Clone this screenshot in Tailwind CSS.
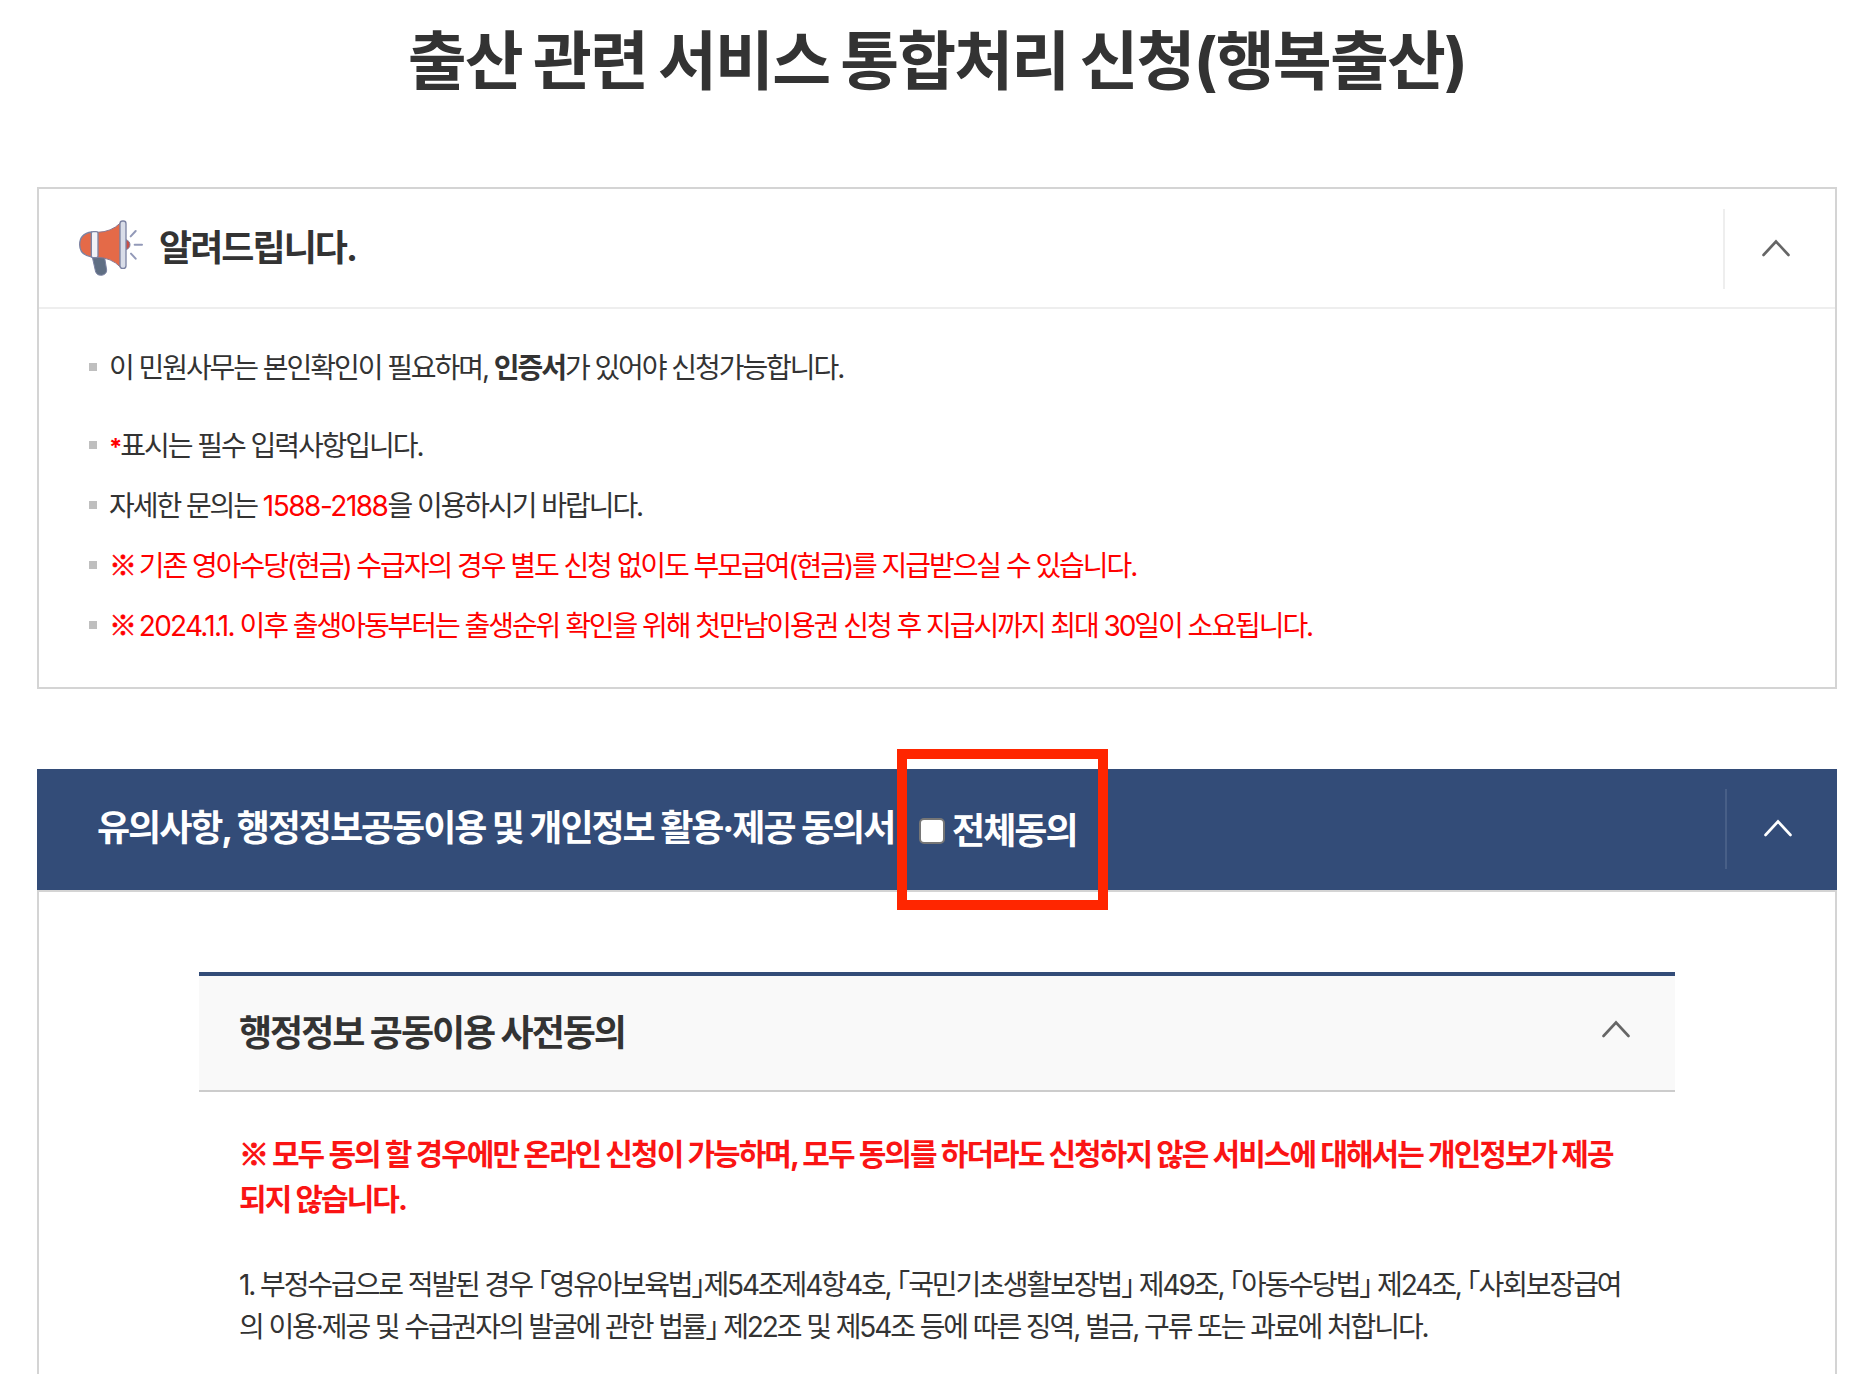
<!DOCTYPE html>
<html lang="ko">
<head>
    <meta charset="UTF-8">
    <meta name="viewport" content="width=device-width, initial-scale=1.0">
    <title>출산 관련 서비스 통합처리 신청(행복출산)</title>
    <script src="https://cdn.jsdelivr.net/npm/@tailwindcss/browser@4"></script>
</head>
<body class="font-[Inter,'Noto_Sans_CJK_KR',sans-serif] bg-white text-[#333] h-[1374px] overflow-hidden">

    <h1 class="h-[187px] pt-[13px] text-center text-[64px] leading-[96px] font-bold tracking-[-1.85px] [word-spacing:-2.2px] whitespace-nowrap">출산 관련 서비스 통합처리 신청(행복출산)</h1>

    <!-- Notice -->
    <section class="mx-[37px] h-[502px] border-2 border-[#d4d4d4]">
        <div class="flex items-center h-[120px] border-b-2 border-[#eee]">
            <svg class="ml-[39px] w-[66px] h-[58px]" viewBox="145 118 198 174" fill="none" stroke-linecap="round">
                <path d="M187 228 L198 277 Q202 288 216 287 Q231 284 231 271 L224 228Z" fill="#5f6e83" stroke="#7c83a3" stroke-width="3"/>
                <path d="M186 157 Q150 162 150 195 Q150 226 187 232Z" fill="#e46a48" stroke="#7c83a3" stroke-width="4"/>
                <path d="M204 158 Q245 157 272 130 V262 Q245 234 204 233Z" fill="#e46a48" stroke="#8c7890" stroke-width="3"/>
                <rect x="185" y="156" width="20" height="78" rx="5" fill="#f1f2f7" stroke="#7c83a3" stroke-width="4"/>
                <path d="M289 180 Q301 184 301 195 Q301 206 289 210Z" fill="#c94f45" stroke="#7c83a3" stroke-width="3"/>
                <rect x="271" y="124" width="18" height="142" rx="8" fill="#d9dde8" stroke="#7c83a3" stroke-width="4"/>
                <path d="M303 170 L318 154 M315 195 H337 M304 222 L318 237" stroke="#9299b8" stroke-width="6"/>
            </svg>
            <h2 class="ml-[15px] text-[36px] font-bold tracking-[-1.95px]">알려드립니다.</h2>
            <div class="ml-auto mt-px flex items-center justify-center w-[112px] h-[80px] border-l-2 border-[#eee]">
                <svg class="w-[28px] h-[18px] mr-[8px] -mt-[2px]" viewBox="0 0 28 18" fill="none" stroke="#666" stroke-width="2.6" stroke-linecap="round"><path d="M1.5 16 L14 2.5 L26.5 16"/></svg>
            </div>
        </div>
        <ul class="pt-[28px] pl-[50px] text-[28px] leading-[60px] tracking-[-2.06px] whitespace-nowrap">
            <li class="flex items-center gap-[12px] mb-[18px]"><i class="size-2 bg-[#bfbfbf]"></i><span class="pt-[2px] -my-px">이 민원사무는 본인확인이 필요하며, <b>인증서</b>가 있어야 신청가능합니다.</span></li>
            <li class="flex items-center gap-[12px]"><i class="size-2 bg-[#bfbfbf]"></i><span class="pt-[2px] -my-px"><em class="not-italic font-bold text-[24px] leading-none text-[#f00]">*</em>표시는 필수 입력사항입니다.</span></li>
            <li class="flex items-center gap-[12px]"><i class="size-2 bg-[#bfbfbf]"></i><span class="pt-[2px] -my-px">자세한 문의는 <em class="not-italic text-[#f00] tracking-[-1.5px]">1588-2188</em>을 이용하시기 바랍니다.</span></li>
            <li class="flex items-center gap-[12px] text-[#f00]"><i class="size-2 bg-[#bfbfbf]"></i><span class="pt-[2px] -my-px"><span class="font-['Noto_Sans_CJK_KR'] leading-none tracking-[-4px] [-webkit-text-stroke:0.5px]">※</span> 기존 영아수당(현금) 수급자의 경우 별도 신청 없이도 부모급여(현금)를 지급받으실 수 있습니다.</span></li>
            <li class="flex items-center gap-[12px] text-[#f00]"><i class="size-2 bg-[#bfbfbf]"></i><span class="pt-[2px] -my-px"><span class="font-['Noto_Sans_CJK_KR'] leading-none tracking-[-4px] [-webkit-text-stroke:0.5px]">※</span> <span class="tracking-[-1.75px]">2024.1.1.</span> 이후 출생아동부터는 출생순위 확인을 위해 첫만남이용권 신청 후 지급시까지 최대 30일이 소요됩니다.</span></li>
        </ul>
    </section>

    <!-- Consent -->
    <section class="mx-[37px] mt-[80px]">
        <div class="relative flex items-center h-[121px] pl-[60px] pb-px bg-[#334c78] text-white text-[36px] font-bold tracking-[-2.04px] whitespace-nowrap">
            <h2 class="-mt-[3px]">유의사항, 행정정보공동이용 및 개인정보 활용·제공 동의서</h2>
            <label class="absolute left-[882px] top-[35px] flex items-center">
                <input type="checkbox" class="appearance-none size-[26px] bg-white border-2 border-[#767676] rounded-[5px]">
                <span class="ml-[7px] tracking-[-1.96px]">전체동의</span>
            </label>
            <div class="absolute left-[860px] -top-[20px] w-[211px] h-[161px] border-[10px] border-[#ff2600]"></div>
            <div class="ml-auto flex items-center justify-center w-[112px] h-[80px] border-l-2 border-[#485f87]">
                <svg class="w-[28px] h-[18px] mr-[8px] -mt-[2px]" viewBox="0 0 28 18" fill="none" stroke="#fff" stroke-width="2.6" stroke-linecap="round"><path d="M1.5 16 L14 2.5 L26.5 16"/></svg>
            </div>
        </div>
        <div class="h-[484px] overflow-hidden pt-[80px] px-[160px] border-2 border-b-0 border-[#d4d4d4]">
            <div class="flex items-center justify-between h-[120px] pl-[40px] pr-[45px] bg-[#f9f9f9] border-t-4 border-t-[#334c78] border-b-2 border-b-[#ccc]">
                <h3 class="text-[36px] font-bold tracking-[-2.04px]">행정정보 공동이용 사전동의</h3>
                <svg class="w-[28px] h-[18px] mb-[8px]" viewBox="0 0 28 18" fill="none" stroke="#666" stroke-width="2.6" stroke-linecap="round"><path d="M1.5 16 L14 2.5 L26.5 16"/></svg>
            </div>
            <div class="pt-[40px] pl-[40px] whitespace-nowrap">
                <p class="text-[30px] leading-[45px] font-bold text-[#fa1414] tracking-[-1.96px]"><span class="font-['Noto_Sans_CJK_KR'] leading-none tracking-[-2.2px] [-webkit-text-stroke:1.2px]">※</span> 모두 동의 할 경우에만 온라인 신청이 가능하며, 모두 동의를 하더라도 신청하지 않은 서비스에 대해서는 개인정보가 제공<br>되지 않습니다.</p>
                <p class="mt-[42px] text-[28px] leading-[42px] tracking-[-2.1px] [font-feature-settings:'halt']">1. 부정수급으로 적발된 경우 「영유아보육법」제54조제4항4호, 「국민기초생활보장법」 제49조, 「아동수당법」 제24조, 「사회보장급여<br>의 이용·제공 및 수급권자의 발굴에 관한 법률」 제22조 및 제54조 등에 따른 징역, 벌금, 구류 또는 과료에 처합니다.</p>
            </div>
        </div>
    </section>
</body>
</html>
